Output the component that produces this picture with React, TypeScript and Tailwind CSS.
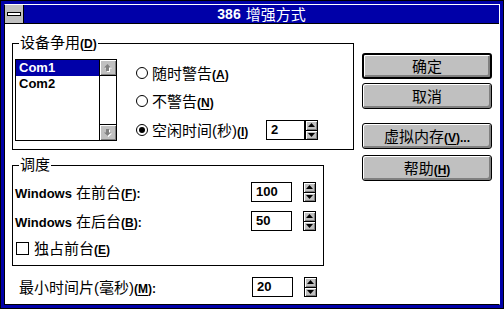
import React from "react";

const latin = "font-['Liberation_Sans','Noto_Sans_CJK_SC',sans-serif]";

function Acc({ k }: { k: string }) {
  return (
    <span className={`${latin} font-bold text-[12px]`}>
      (<span className="underline underline-offset-[2px]">{k}</span>)
    </span>
  );
}

function ArrowSvg({ up }: { up: boolean }) {
  const pts = up ? "3.5,0 7,3.5 5,3.5 5,7 2,7 2,3.5 0,3.5" : "2,0 5,0 5,3.5 7,3.5 3.5,7 0,3.5 2,3.5";
  return (
    <svg width="8" height="8" viewBox="0 0 8 8">
      <polygon points={pts} fill="#ffffff" transform="translate(1,1)" />
      <polygon points={pts} fill="#808080" />
    </svg>
  );
}

function ScrollBtn({ up }: { up: boolean }) {
  return (
    <div
      className={`h-[16px] w-full bg-[#c0c0c0] flex items-center justify-center shadow-[inset_1px_1px_0_#fff,inset_-1px_-1px_0_#808080] ${
        up ? "border-b border-black" : "border-t border-black"
      }`}
    >
      <ArrowSvg up={up} />
    </div>
  );
}

function Spin() {
  return (
    <div className="w-[13px] h-[20px] border border-black bg-[#c0c0c0] flex flex-col">
      <div className="flex-1 flex items-center justify-center border-b border-black shadow-[inset_1px_1px_0_#fff,inset_-1px_-1px_0_#808080]">
        <svg width="7" height="4" viewBox="0 0 7 4">
          <polygon points="3.5,0 7,4 0,4" fill="#000" />
        </svg>
      </div>
      <div className="flex-1 flex items-center justify-center shadow-[inset_1px_1px_0_#fff,inset_-1px_-1px_0_#808080]">
        <svg width="7" height="4" viewBox="0 0 7 4">
          <polygon points="0,0 7,0 3.5,4" fill="#000" />
        </svg>
      </div>
    </div>
  );
}

function Field({ value, w, gap }: { value: string; w: string; gap: string }) {
  return (
    <div className="flex items-center">
      <div className={`${w} h-[20px] border border-black bg-white flex items-center pl-[4px] ${latin} font-bold text-[13px]`}>
        {value}
      </div>
      <div className={gap}>
        <Spin />
      </div>
    </div>
  );
}

function Radio({ checked }: { checked?: boolean }) {
  return (
    <span className="w-[12px] h-[12px] rounded-full border border-black bg-white flex items-center justify-center shrink-0">
      {checked && <span className="w-[6px] h-[6px] rounded-full bg-black" />}
    </span>
  );
}

function Btn({ children, def, cls }: { children: React.ReactNode; def?: boolean; cls?: string }) {
  return (
    <div
      className={`h-[26px] w-[130px] rounded-[3px] border-black bg-[#c0c0c0] flex items-center justify-center text-[15px] ${
        def ? "border-2" : "border"
      } shadow-[inset_1px_1px_0_#fff,inset_-2px_-2px_0_#808080] ${cls ?? ""}`}
    >
      <span className="leading-none">{children}</span>
    </div>
  );
}

export default function App() {
  return (
    <div className={`w-[504px] h-[309px] border border-black bg-[#0000a8] p-[3px] ${latin} text-black`}>
      <div className="w-full h-full flex flex-col border-l border-l-black border-t border-t-white border-r border-r-white border-b border-b-black bg-white">
        {/* title bar */}
        <div className="h-[19px] flex border-b border-black shrink-0">
          <div className="w-[19px] h-full bg-[#c0c0c0] border-r border-black flex items-center justify-center">
            <div className="w-[14px] h-[4px] bg-white border border-black" />
          </div>
          <div className="flex-1 bg-[#0000a8] flex items-center justify-center text-white">
            <span className="font-bold text-[14px] leading-none">386</span>
            <span className="text-[15px] leading-none ml-[5px]">增强方式</span>
          </div>
        </div>

        {/* content */}
        <div className="flex-1 flex pl-[7px] pt-[11px]">
          <div className="w-[342px] flex flex-col">
            <fieldset className="border border-black h-[115px] pl-[2px] pt-[7px]">
              <legend className="ml-[4px] px-[1px] text-[15px] leading-[16px]">
                设备争用<Acc k="D" />
              </legend>
              <div className="flex">
                <div className="w-[102px] h-[82px] border border-black flex bg-white">
                  <div className="w-[83px] flex flex-col">
                    <div className={`h-[16px] bg-[#0000a8] text-white ${latin} font-bold text-[13px] pl-[3px] leading-[16px]`}>
                      Com1
                    </div>
                    <div className={`h-[16px] ${latin} font-bold text-[13px] pl-[3px] leading-[16px]`}>Com2</div>
                  </div>
                  <div className="w-[17px] border-l border-black flex flex-col justify-between">
                    <ScrollBtn up />
                    <ScrollBtn up={false} />
                  </div>
                </div>
                <div className="ml-[19px] w-[182px] flex flex-col pt-[6px]">
                  <div className="h-[16px] flex items-center">
                    <Radio />
                    <span className="ml-[4px] text-[15px] leading-none">
                      随时警告<Acc k="A" />
                    </span>
                  </div>
                  <div className="h-[16px] mt-[12px] flex items-center">
                    <Radio />
                    <span className="ml-[4px] text-[15px] leading-none">
                      不警告<Acc k="N" />
                    </span>
                  </div>
                  <div className="h-[20px] mt-[11px] flex items-center">
                    <Radio checked />
                    <span className="ml-[4px] text-[15px] leading-none">
                      空闲时间(秒)<Acc k="I" />
                    </span>
                    <div className="ml-auto">
                      <Field value="2" w="w-[39px]" gap="" />
                    </div>
                  </div>
                </div>
              </div>
            </fieldset>

            <fieldset className="mt-[7px] w-[312px] border border-black h-[109px] pl-[2px] pt-[9px]">
              <legend className="ml-[4px] px-[1px] text-[15px] leading-[16px]">调度</legend>
              <div className="flex flex-col">
                <div className="h-[20px] flex items-center">
                  <span className="w-[236px] text-[15px] leading-none">
                    <span className={`${latin} font-bold text-[13px]`}>Windows</span> 在前台<Acc k="F" />
                    <span className={`${latin} font-bold text-[12px]`}>:</span>
                  </span>
                  <Field value="100" w="w-[41px]" gap="ml-[11px]" />
                </div>
                <div className="h-[20px] mt-[9px] flex items-center">
                  <span className="w-[236px] text-[15px] leading-none">
                    <span className={`${latin} font-bold text-[13px]`}>Windows</span> 在后台<Acc k="B" />
                    <span className={`${latin} font-bold text-[12px]`}>:</span>
                  </span>
                  <Field value="50" w="w-[41px]" gap="ml-[11px]" />
                </div>
                <div className="h-[16px] mt-[9px] flex items-center">
                  <span className="ml-[1px] w-[13px] h-[13px] border border-black bg-white shrink-0" />
                  <span className="ml-[5px] text-[15px] leading-none">
                    独占前台<Acc k="E" />
                  </span>
                </div>
              </div>
            </fieldset>

            <div className="mt-[11px] h-[20px] flex items-center">
              <span className="w-[240px] pl-[7px] text-[15px] leading-none">
                最小时间片(毫秒)<Acc k="M" />
                <span className={`${latin} font-bold text-[12px]`}>:</span>
              </span>
              <Field value="20" w="w-[41px]" gap="ml-[11px]" />
            </div>
          </div>

          <div className="ml-[8px] pt-[18px] flex flex-col">
            <Btn def>确定</Btn>
            <Btn cls="mt-[4px]">取消</Btn>
            <Btn cls="mt-[14px]">
              虚拟内存<Acc k="V" />
              <span className={`${latin} font-bold text-[12px]`}>...</span>
            </Btn>
            <Btn cls="mt-[6px]">
              帮助<Acc k="H" />
            </Btn>
          </div>
        </div>
      </div>
    </div>
  );
}
